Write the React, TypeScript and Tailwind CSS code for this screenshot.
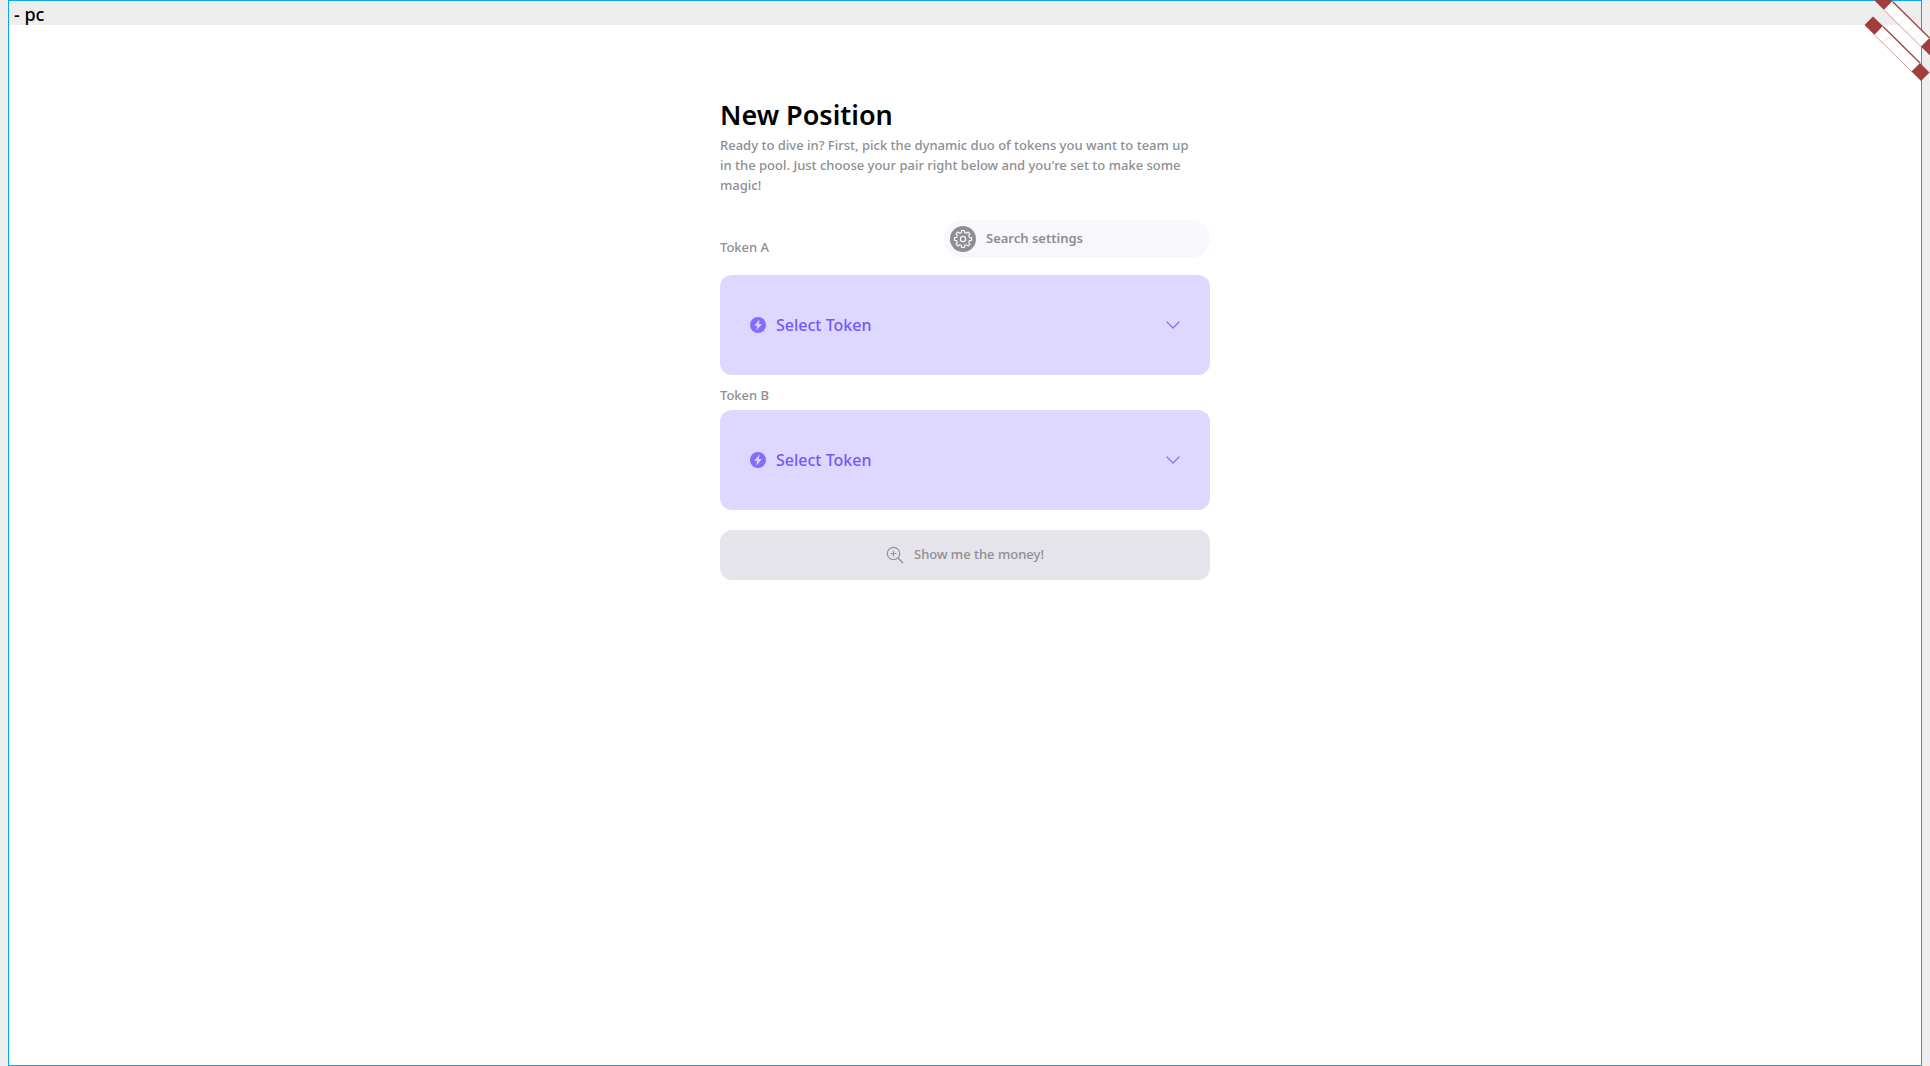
import { useId } from "react";

function Ribbon({ transform }: { transform?: string }) {
  return (
    <g transform={transform}>
      <path d="M43 16.5 L53 26 L44.5 35 L34.5 25 Z" fill="#a03e3e" />
      <path d="M53 26 L90 63 L81.500 72 L44.500 35 Z" fill="#fff" />
      <path d="M53 26.500 L90 63" stroke="#a03e3e" strokeWidth="1.300" />
      <path d="M45 35.500 L82 72" stroke="#a03e3e" strokeOpacity=".5" strokeWidth="1" />
      <path
        d="M58 38 L52 43 M65 45 L59 50 M73 53 L67 58 M80 60 L74 65"
        stroke="#a03e3e"
        strokeOpacity=".15"
        strokeWidth=".8"
      />
      <path d="M90 63 L99.500 72.500 L91 81 L81.500 71.500 Z" fill="#a03e3e" />
    </g>
  );
}

function CornerRibbons() {
  return (
    <svg
      viewBox="0 0 100 100"
      className="pointer-events-none absolute top-0 right-0 size-[100px]"
      aria-hidden="true"
    >
      <Ribbon transform="translate(9.500 -25)" />
      <Ribbon />
    </svg>
  );
}

function gearPath(cx: number, cy: number, teeth: number, outer: number, inner: number) {
  const points: string[] = [];
  const step = (Math.PI * 2) / teeth;
  for (let i = 0; i < teeth; i++) {
    const a = i * step - Math.PI / 2;
    const corners: [number, number][] = [
      [-0.32, inner],
      [-0.2, outer],
      [0.2, outer],
      [0.32, inner],
    ];
    for (const [offset, r] of corners) {
      const t = a + offset * step;
      points.push(`${(cx + r * Math.cos(t)).toFixed(2)} ${(cy + r * Math.sin(t)).toFixed(2)}`);
    }
  }
  return `M${points.join("L")}Z`;
}

function GearIcon() {
  return (
    <svg viewBox="0 0 26 26" className="size-[26px] shrink-0" aria-hidden="true">
      <circle cx="13" cy="13" r="13" fill="#8e8e93" />
      <g fill="none" stroke="#f7f7fc" strokeWidth="1.200" strokeLinejoin="round">
        <path d={gearPath(13, 13, 8, 8.6, 6.6)} />
        <circle cx="13" cy="13" r="2.600" />
      </g>
    </svg>
  );
}

function BoltIcon() {
  return (
    <svg viewBox="0 0 16 16" className="size-4 shrink-0" aria-hidden="true">
      <circle cx="8" cy="8" r="8" fill="#866bff" />
      <path d="M9.600 2.600 L4.200 8.800 H7.200 L6.300 13.400 L11.800 7.100 H8.700 Z" fill="#ded7ff" />
    </svg>
  );
}

function ChevronIcon() {
  return (
    <svg viewBox="0 0 14 8" className="h-2 w-[14px] shrink-0" aria-hidden="true">
      <path
        d="M1 1 L7 7 L13 1"
        fill="none"
        stroke="#866bff"
        strokeWidth="1.200"
        strokeLinecap="round"
        strokeLinejoin="round"
      />
    </svg>
  );
}

function ZoomPlusIcon() {
  return (
    <svg viewBox="0 0 18 18" className="size-[18px] shrink-0" aria-hidden="true">
      <g fill="none" stroke="#949499" strokeLinecap="round">
        <circle cx="7.500" cy="7.500" r="6.200" strokeWidth="1.200" />
        <path d="M7.500 5 V10 M5 7.500 H10" strokeWidth="1.200" />
        <path d="M12.200 12.200 L16.500 16.500" strokeWidth="1.600" />
      </g>
    </svg>
  );
}

function TokenButton({ labelId }: { labelId: string }) {
  return (
    <button
      type="button"
      aria-labelledby={labelId}
      className="flex h-[100px] w-full items-center gap-[10px] rounded-xl bg-[#ded7ff] px-[30px] text-left"
    >
      <BoltIcon />
      <span className="flex-1 text-base font-medium text-[#7357ff]">Select Token</span>
      <ChevronIcon />
    </button>
  );
}

export default function App() {
  const tokenA = useId();
  const tokenB = useId();
  return (
    <div className="relative min-h-screen overflow-hidden bg-[#eeeeee] px-2 font-['Noto_Sans',sans-serif]">
      <div className="flex min-h-screen flex-col border border-[#0aa6f2] bg-white">
        <header className="flex h-6 items-center bg-[#eeeeee] px-[5px] pt-0.5 text-lg font-medium text-black">
          - pc
        </header>
        <main className="mx-auto flex w-full max-w-[490px] flex-col pt-[70px] text-[13px] font-medium text-[#8e8e93]">
          <h1 className="text-[27px] leading-10 font-semibold text-black">New Position</h1>
          <p className="pr-3 leading-5">
            Ready to dive in? First, pick the dynamic duo of tokens you want to team up in the pool. Just
            choose your pair right below and you're set to make some magic!
          </p>
          <div className="mt-[25px] flex items-start justify-between">
            <span id={tokenA} className="mt-[17px] leading-5">
              Token A
            </span>
            <label className="flex h-[38px] w-[266px] items-center gap-[10px] rounded-full bg-[#f7f7fc] px-[6px]">
              <GearIcon />
              <input
                type="text"
                aria-label="Search settings"
                placeholder="Search settings"
                className="min-w-0 flex-1 bg-transparent font-semibold outline-none placeholder:text-[#8e8e93]"
              />
            </label>
          </div>
          <div className="mt-[17px]">
            <TokenButton labelId={tokenA} />
          </div>
          <span id={tokenB} className="mt-[10px] mb-[5px] leading-5">
            Token B
          </span>
          <TokenButton labelId={tokenB} />
          <button
            type="button"
            className="mt-5 flex h-[50px] w-full items-center justify-center gap-[10px] rounded-xl bg-[#e5e4ea]"
          >
            <ZoomPlusIcon />
            Show me the money!
          </button>
        </main>
      </div>
      <CornerRibbons />
    </div>
  );
}
